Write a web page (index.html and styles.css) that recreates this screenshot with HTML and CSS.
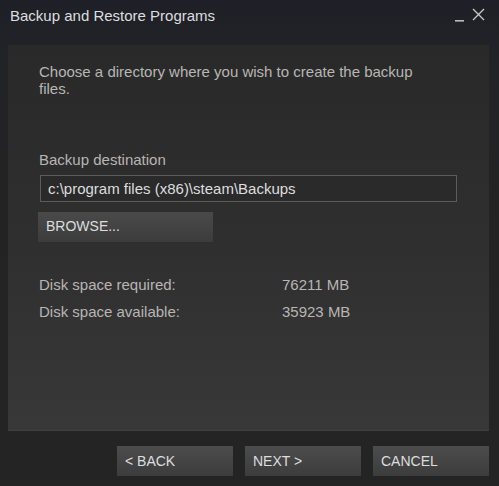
FILE: index.html
```html
<!DOCTYPE html>
<html>
<head>
<meta charset="utf-8">
<link rel="stylesheet" href="styles.css">
</head>
<body>
<div class="window">
  <div class="titlebar">
    <div class="title">Backup and Restore Programs</div>
    <div class="controls">
      <svg class="min" width="10" height="10" viewBox="0 0 10 10"><rect x="0" y="8" width="9" height="1.6" fill="#b9b9b9"/></svg>
      <svg class="close" width="13" height="13" viewBox="0 0 13 13"><path d="M1 1L12 12M12 1L1 12" stroke="#c9c9c9" stroke-width="1.3"/></svg>
    </div>
  </div>
  <div class="panel">
    <p class="intro">Choose a directory where you wish to create the backup files.</p>
    <div class="label">Backup destination</div>
    <div class="input">c:\program files (x86)\steam\Backups</div>
    <div class="browse">BROWSE...</div>
    <div class="stats">
      <div class="row"><span class="k">Disk space required:</span><span class="v">76211 MB</span></div>
      <div class="row"><span class="k">Disk space available:</span><span class="v">35923 MB</span></div>
    </div>
  </div>
  <div class="footer">
    <div class="btn">&lt; BACK</div>
    <div class="btn">NEXT &gt;</div>
    <div class="btn">CANCEL</div>
  </div>
</div>
</body>
</html>
```
FILE: styles.css
```css
html, body { margin: 0; padding: 0; background: #232323; }
body { font-family: "Liberation Sans", Arial, sans-serif; }
.window {
  width: 499px; height: 486px;
  display: flex; flex-direction: column;
  background: linear-gradient(#1e2027 0px, #222327 60px, #232323 200px, #242424 486px);
  overflow: hidden;
}
.titlebar {
  height: 45px; flex: none;
  display: flex; justify-content: space-between; align-items: flex-start;
}
.title {
  color: #dcdedf; font-size: 15px; line-height: 17px;
  padding: 7px 0 0 10px;
}
.controls { display: flex; align-items: flex-start; padding: 8px 14px 0 0; gap: 7px; }
.controls .min { margin-top: 4px; }
.panel {
  flex: none; height: 386px; box-sizing: border-box;
  margin: 0 10px 0 8px;
  background: linear-gradient(#292929, #2f2f2f 200px, #383838);
  padding: 18px 30px 0 31px;
  border-bottom: 1px solid #404040;
}
.intro {
  margin: 0; color: #b8b6b4; font-size: 15px; line-height: 17px;
  padding-right: 20px;
}
.label {
  margin-top: 54px; color: #b8b6b4; font-size: 15px; line-height: 17px;
}
.input {
  margin-top: 7px; margin-left: 1px;
  height: 27px; box-sizing: border-box; width: 417px;
  border: 1px solid #5c5c5c; background: #2a2a2a;
  color: #dcdedf; font-size: 15px; line-height: 25px; padding-left: 7px;
}
.browse {
  margin-top: 10px; width: 175px; height: 30px; box-sizing: border-box;
  background: linear-gradient(#4a4a4a, #3c3c3c);
  color: #dcdedf; font-size: 14px; line-height: 29px; padding-left: 8px;
  margin-left: -1px;
}
.stats { margin-top: 34px; }
.row { display: flex; color: #b8b6b4; font-size: 15px; line-height: 17px; height: 27px; }
.row .k { width: 243px; }
.footer {
  flex: none; display: flex; justify-content: flex-end; gap: 12px;
  padding: 15px 10px 0 0;
}
.btn {
  width: 116px; height: 30px; box-sizing: border-box;
  background: linear-gradient(#4c4c4c, #3c3c3c);
  color: #dcdedf; font-size: 14px; line-height: 30px; padding-left: 8px;
}
```
